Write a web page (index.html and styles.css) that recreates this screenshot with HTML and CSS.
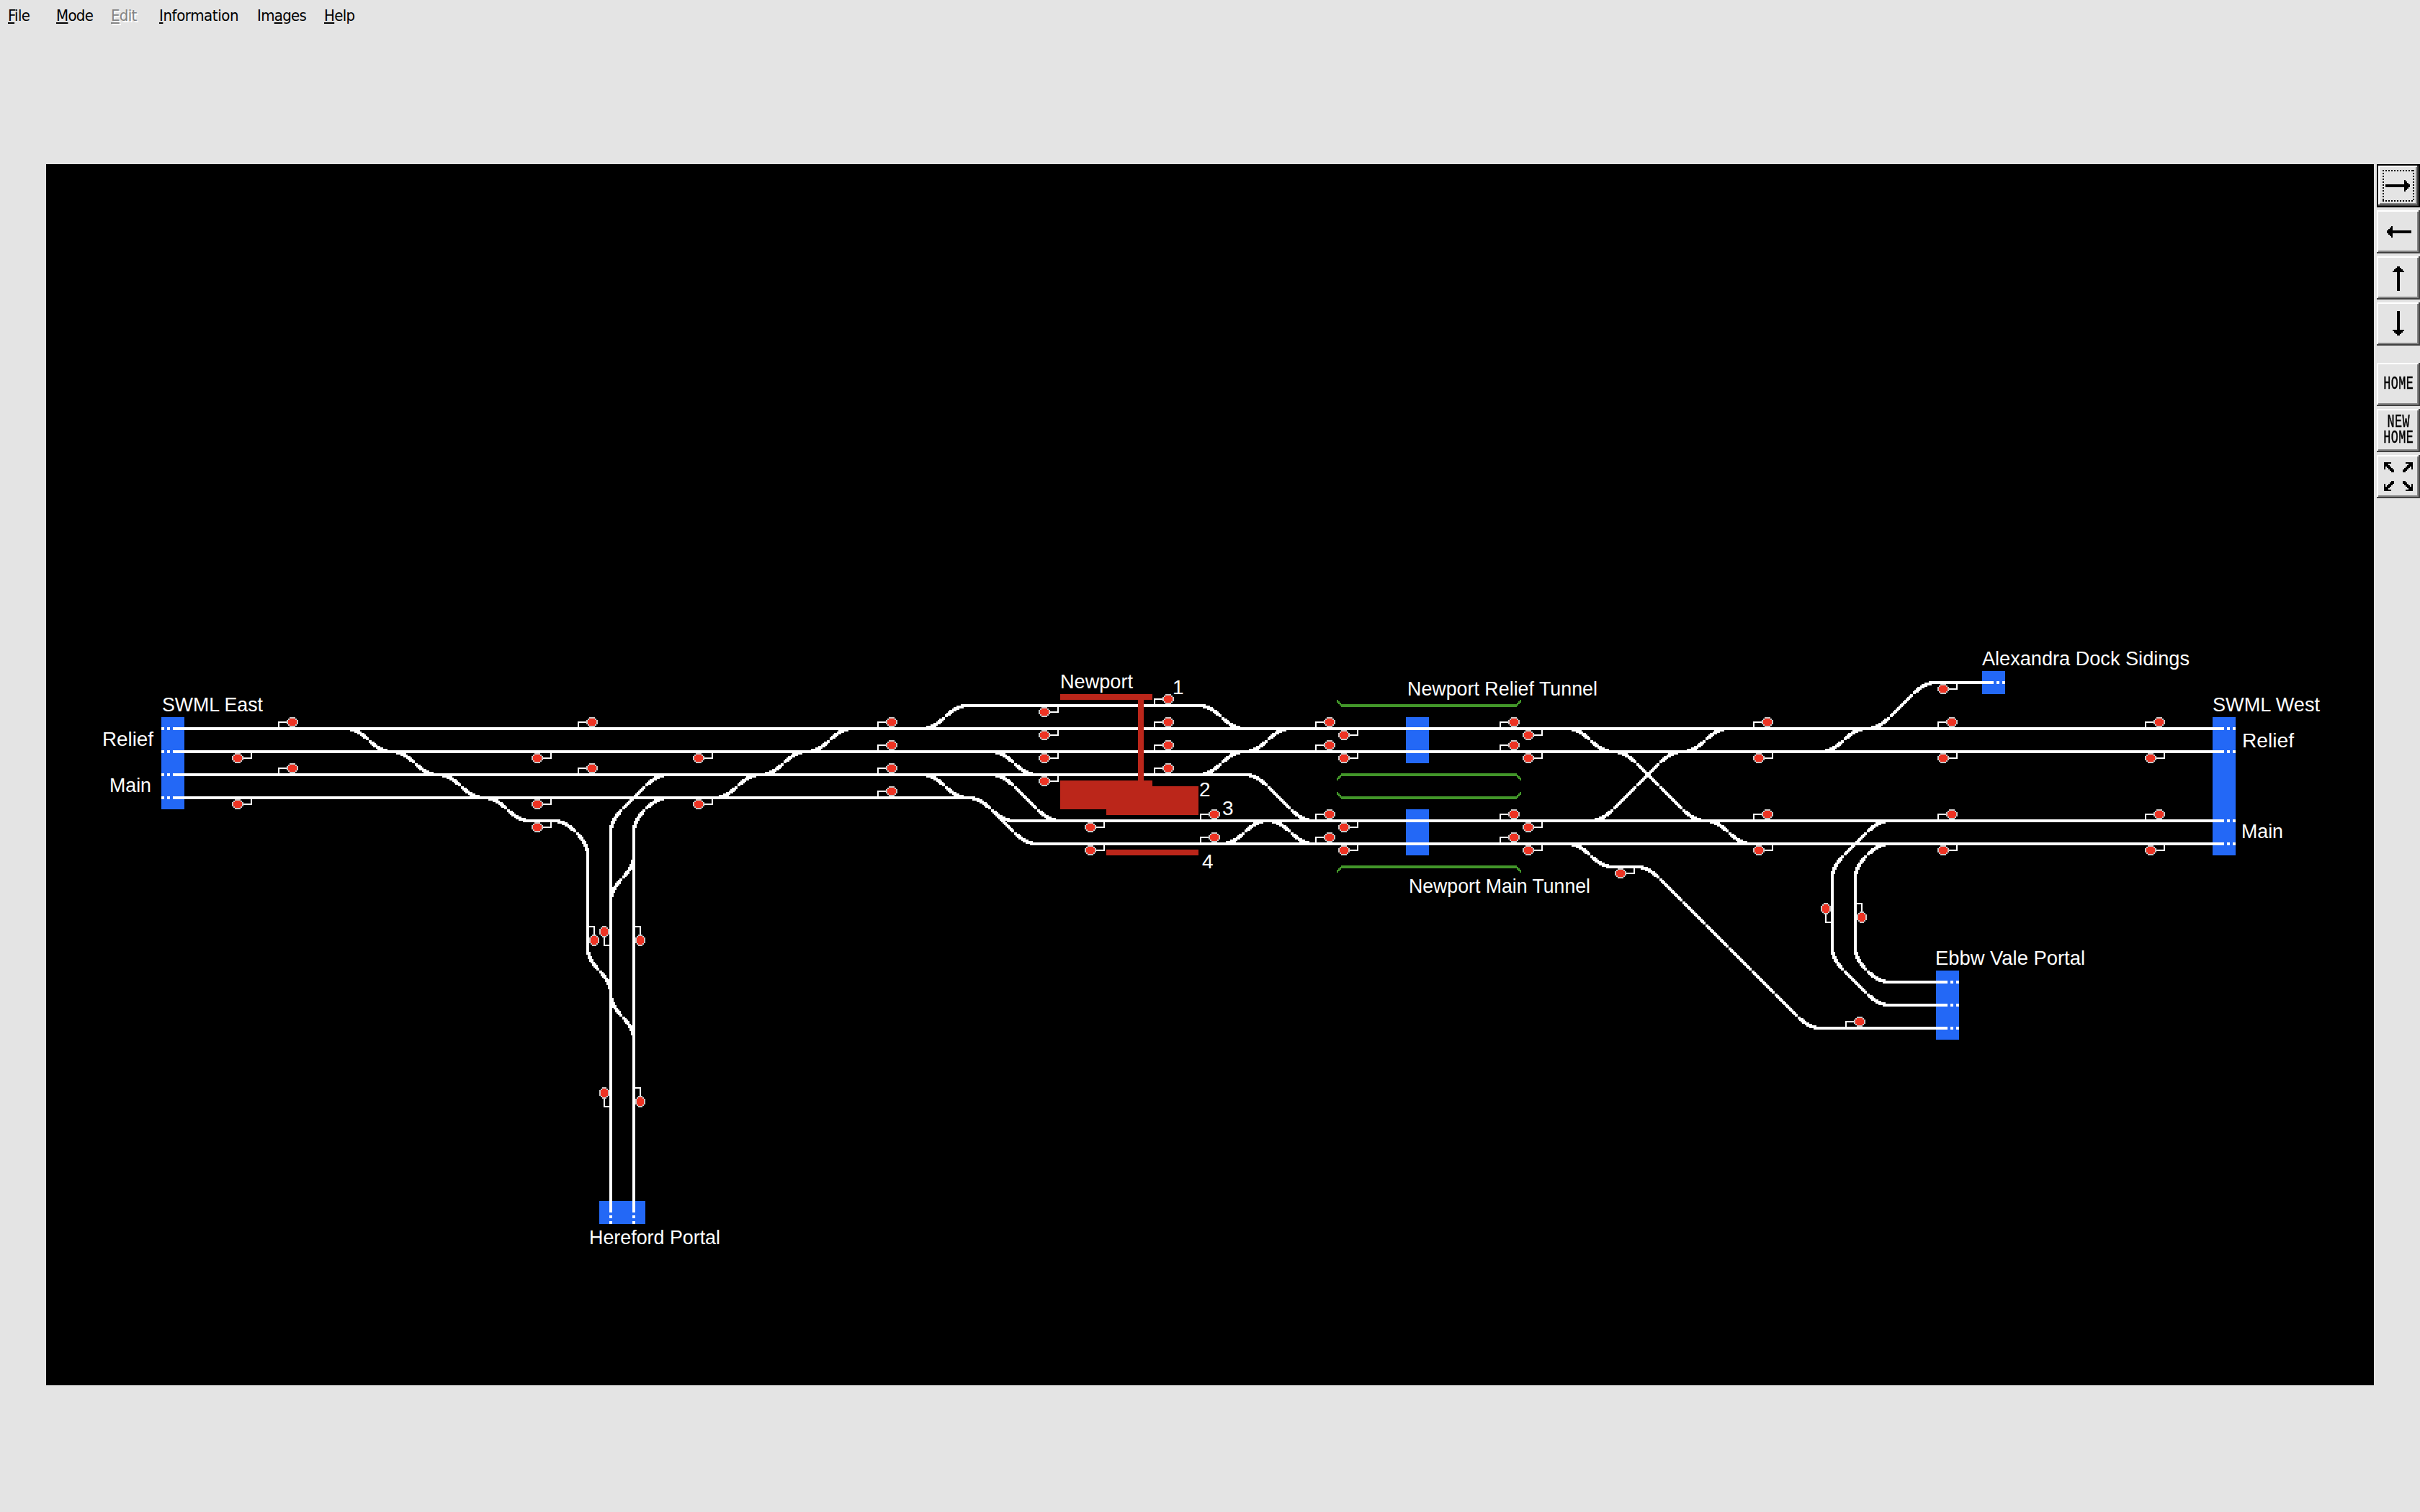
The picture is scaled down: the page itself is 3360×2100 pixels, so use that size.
FILE: index.html
```html
<!DOCTYPE html>
<html lang="en">
<head>
<meta charset="utf-8">
<title>Newport</title>
<link rel="stylesheet" href="styles.css">
</head>
<body>
<nav class="menu">
  <span class="item file"><u>F</u>ile</span>
  <span class="item mode"><u>M</u>ode</span>
  <span class="item edit disabled"><u>E</u>dit</span>
  <span class="item information"><u>I</u>nformation</span>
  <span class="item images">Im<u>a</u>ges</span>
  <span class="item help"><u>H</u>elp</span>
</nav>
<main class="workspace">
  <svg class="diagram" viewBox="64 228 3232 1696">
    <defs>
      <g id="sig-up">
        <path class="post" d="M-20-10h12v2h-10v6h-2z"/>
        <path class="rim" d="M-4-16h8v2h2v2h2v6h-2v2h-2v2h-8v-2h-2v-2h-2v-6h2v-2h2z"/>
        <path class="lamp" d="M-4-14h8v2h2v6h-2v2h-8v-2h-2v-6h2z"/>
      </g>
      <g id="sig-left">
        <path class="post" d="M-10 16h2v10h6v2h-8z"/>
        <path class="rim" d="M-12 0h6v2h2v2h2v8h-2v2h-2v2h-6v-2h-2v-2h-2v-8h2v-2h2z"/>
        <path class="lamp" d="M-12 2h6v2h2v8h-2v2h-6v-2h-2v-8h2z"/>
      </g>
    </defs>
    <g class="portals">
      <rect x="224" y="996" width="32" height="128"/>
      <rect x="832" y="1668" width="64" height="32"/>
      <rect x="1952" y="996" width="32" height="64"/>
      <rect x="1952" y="1124" width="32" height="64"/>
      <rect x="2752" y="932" width="32" height="32"/>
      <rect x="3072" y="996" width="32" height="192"/>
      <rect x="2688" y="1348" width="32" height="96"/>
    </g>
    <path class="tunnels" id="tunnels"/>
    <path class="track" id="track"/>
    <g class="platforms">
      <rect x="1472" y="964" width="128" height="8"/>
      <rect x="1580" y="964" width="8" height="120"/>
      <rect x="1472" y="1084" width="128" height="40"/>
      <rect x="1536" y="1092" width="128" height="40"/>
      <rect x="1536" y="1180" width="128" height="8"/>
    </g>
    <g id="signals"></g>
    <g class="labels">
      <text x="225" y="988" textLength="140" lengthAdjust="spacingAndGlyphs">SWML East</text>
      <text x="142" y="1036" textLength="71" lengthAdjust="spacingAndGlyphs">Relief</text>
      <text x="152" y="1100" textLength="58" lengthAdjust="spacingAndGlyphs">Main</text>
      <text x="818" y="1728" textLength="182" lengthAdjust="spacingAndGlyphs">Hereford Portal</text>
      <text x="1472" y="956" textLength="101" lengthAdjust="spacingAndGlyphs">Newport</text>
      <text x="1628" y="964">1</text>
      <text x="1665" y="1106">2</text>
      <text x="1697" y="1132">3</text>
      <text x="1669" y="1206">4</text>
      <text x="1954" y="966" textLength="264" lengthAdjust="spacingAndGlyphs">Newport Relief Tunnel</text>
      <text x="1956" y="1240" textLength="252" lengthAdjust="spacingAndGlyphs">Newport Main Tunnel</text>
      <text x="2752" y="924" textLength="288" lengthAdjust="spacingAndGlyphs">Alexandra Dock Sidings</text>
      <text x="3072" y="988" textLength="149" lengthAdjust="spacingAndGlyphs">SWML West</text>
      <text x="3113" y="1038" textLength="72" lengthAdjust="spacingAndGlyphs">Relief</text>
      <text x="3112" y="1164" textLength="58" lengthAdjust="spacingAndGlyphs">Main</text>
      <text x="2687" y="1340" textLength="208" lengthAdjust="spacingAndGlyphs">Ebbw Vale Portal</text>
    </g>
  </svg>
  <div class="tools">
    <button class="tool active"><svg viewBox="0 0 30 30"><path d="M6 14h13v-3h1v1h1v1h1v1h1v2h-1v1h-1v1h-1v1h-1v-3h-13z"/></svg></button>
    <button class="tool"><svg viewBox="0 0 30 30"><path d="M24 14h-13v-3h-1v1h-1v1h-1v1h-1v2h1v1h1v1h1v1h1v-3h13z"/></svg></button>
    <button class="tool"><svg viewBox="0 0 30 30"><path d="M14 24v-13h-3v-1h1v-1h1v-1h1v-1h2v1h1v1h1v1h1v1h-3v13z"/></svg></button>
    <button class="tool"><svg viewBox="0 0 30 30"><path d="M14 6v13h-3v1h1v1h1v1h1v1h2v-1h1v-1h1v-1h1v-1h-3v-13z"/></svg></button>
    <button class="tool spaced"><span class="caption">HOME</span></button>
    <button class="tool"><span class="caption">NEW<br>HOME</span></button>
    <button class="tool"><svg viewBox="0 0 30 30">
      <defs><path id="corner" d="M5 5h5v1h-2v1h1v1h1v1h1v1h1v2h-2v-1h-1v-1h-1v-1h-1v-1h-1v2h-1z"/></defs>
      <use href="#corner"/>
      <use href="#corner" transform="matrix(-1 0 0 1 30 0)"/>
      <use href="#corner" transform="matrix(1 0 0 -1 0 30)"/>
      <use href="#corner" transform="matrix(-1 0 0 -1 30 30)"/>
    </svg></button>
  </div>
</main>
<script src="diagram.js"></script>
</body>
</html>
```
FILE: styles.css
```css
* { box-sizing: border-box; }

body {
  margin: 0;
  width: 3360px;
  height: 2100px;
  overflow: hidden;
  background: #e4e4e4;
  color: #000;
  font-family: "DejaVu Sans Condensed", "DejaVu Sans", sans-serif;
}

.menu {
  display: flex;
  height: 228px;
  padding: 8px 0 0 11px;
  font-size: 22px;
  line-height: 28px;
  white-space: nowrap;
}

.item { flex: none; font-stretch: condensed; letter-spacing: -0.7px; }
.item u { text-decoration-thickness: 2px; text-underline-offset: 2px; text-decoration-skip-ink: none; }
.file { width: 67px; }
.mode { width: 76px; }
.edit { width: 67px; }
.information { width: 136px; letter-spacing: -0.4px; }
.images { width: 93px; }
.disabled { color: #848484; text-shadow: 2px 2px #fff; }

.workspace {
  display: flex;
  gap: 4px;
  padding-left: 64px;
}

.diagram {
  display: block;
  flex: none;
  width: 3232px;
  height: 1696px;
  background: #000;
  shape-rendering: crispEdges;
}

.portals { fill: #2368f6; }
.platforms { fill: #bb261a; }
.tunnels { fill: #429629; }
.track, .post { fill: #fff; }
.rim { fill: #c8c8c8; }
.lamp { fill: #ed3323; }
.labels {
  fill: #fff;
  font-family: "Liberation Sans", Arial, sans-serif;
  font-size: 28px;
}

.tools { display: flex; flex-direction: column; gap: 4px; }

.tool {
  display: flex;
  align-items: center;
  justify-content: center;
  width: 60px;
  height: 60px;
  padding: 0;
  border: 0;
  color: #000;
  background: #e4e4e4;
  box-shadow: inset -2px -2px #424242, inset 2px 2px #fff, inset -4px -4px #848484;
}
.tool svg {
  display: block;
  width: 60px;
  height: 60px;
  shape-rendering: crispEdges;
}
.caption {
  flex: none;
  font: 25px/22px "Liberation Mono", "Courier New", monospace;
  letter-spacing: 0.6px;
  -webkit-text-stroke: 0.5px #000;
  text-align: center;
  transform: scaleX(0.67);
}
.tool.spaced { margin-top: 20px; }
.tool.active {
  position: relative;
  box-shadow: inset 0 0 0 2px #000, inset -4px -4px #424242, inset 4px 4px #fff, inset -6px -6px #848484;
}
.tool.active::after {
  content: "";
  position: absolute;
  inset: 8px;
  background:
    repeating-linear-gradient(90deg, #000 0 2px, transparent 2px 4px) 0 0 / 100% 2px no-repeat,
    repeating-linear-gradient(90deg, #000 0 2px, transparent 2px 4px) 0 100% / 100% 2px no-repeat,
    repeating-linear-gradient(#000 0 2px, transparent 2px 4px) 0 0 / 2px 100% no-repeat,
    repeating-linear-gradient(#000 0 2px, transparent 2px 4px) 100% 0 / 2px 100% no-repeat;
}
```
FILE: diagram.js
```js
// The diagram is built from 32px cells whose origin is (64, 228);
// curves are stepped on a 2px grid and clipped to their own cell.
const cells = new Set();
let trackPath = "";

function rect(x, y, w, h) { return `M${x} ${y}h${w}v${h}h${-w}z`; }

function stamp(x, y, box) {
  const px = Math.round((x - 2) / 2) * 2, py = Math.round((y - 2) / 2) * 2;
  for (const dx of [0, 2]) for (const dy of [0, 2]) {
    const a = px + dx, b = py + dy;
    if (a >= box[0] && b >= box[1] && a < box[0] + 32 && b < box[1] + 32) cells.add(a + "," + b);
  }
}

function piece(x0, y0, x1, y1) {
  const dx = x1 - x0, dy = y1 - y0;
  let cx = (x0 + x1) / 2, cy = (y0 + y1) / 2;
  let box = [Math.min(x0, x1), Math.min(y0, y1)];
  if (Math.abs(dy) === 16) {
    cy = (y0 - 228) % 32 === 16 ? y0 : y1;
    box[1] = cy - 16;
  } else if (Math.abs(dx) === 16) {
    cx = (x0 - 64) % 32 === 16 ? x0 : x1;
    box[0] = cx - 16;
  }
  for (let i = 0; i <= 151; i++) {
    const t = i / 151, s = 1 - t;
    stamp(s * s * x0 + 2 * s * t * cx + t * t * x1, s * s * y0 + 2 * s * t * cy + t * t * y1, box);
  }
}

function track(...p) {
  for (let i = 0; i + 3 < p.length; i += 2) {
    const [x0, y0, x1, y1] = p.slice(i, i + 4);
    const dx = x1 - x0, dy = y1 - y0;
    if (dy === 0) trackPath += rect(Math.min(x0, x1), y0 - 2, Math.abs(dx), 4);
    else if (dx === 0) trackPath += rect(x0 - 2, Math.min(y0, y1), 4, Math.abs(dy));
    else if (Math.abs(dx) === Math.abs(dy)) {
      const n = Math.abs(dx) / 32;
      for (let k = 0; k < n; k++)
        piece(x0 + dx * k / n, y0 + dy * k / n, x0 + dx * (k + 1) / n, y0 + dy * (k + 1) / n);
    } else piece(x0, y0, x1, y1);
  }
}

// running lines
track(240, 1012, 3088, 1012);
track(240, 1044, 3088, 1044);
track(240, 1076, 1728, 1076, 1760, 1092, 1792, 1124, 1824, 1140);
track(240, 1108, 1344, 1108, 1376, 1124, 1408, 1156, 1440, 1172, 3088, 1172);
track(1376, 1124, 1408, 1140, 3088, 1140);
track(1344, 980, 1664, 980);
for (const y of [1012, 1044, 1076, 1108]) for (const x of [224, 232]) trackPath += rect(x, y - 2, 4, 4);
for (const y of [1012, 1044, 1140, 1172]) for (const x of [3092, 3100]) trackPath += rect(x, y - 2, 4, 4);

// crossovers: centre corner, falling or rising to the right
for (const [x, y] of [[512, 1028], [576, 1060], [640, 1092], [704, 1124], [1312, 1092], [1408, 1060],
  [1696, 996], [1792, 1156], [2208, 1028], [2400, 1156], [2208, 1188]]) track(x - 32, y - 16, x, y, x + 32, y + 16);
for (const [x, y] of [[1024, 1092], [1088, 1060], [1152, 1028], [1312, 996], [1696, 1060], [1760, 1028],
  [1728, 1156], [2368, 1028], [2560, 1028]]) track(x - 32, y + 16, x, y, x + 32, y - 16);
track(1376, 1076, 1408, 1092, 1440, 1124, 1472, 1140);
track(2240, 1044, 2272, 1060, 2336, 1124, 2368, 1140);
track(2208, 1140, 2240, 1124, 2304, 1060, 2336, 1044);

// Hereford branch
track(736, 1140, 768, 1140, 800, 1156, 816, 1188, 816, 1316, 832, 1348, 848, 1380, 864, 1412, 880, 1444);
track(928, 1076, 896, 1092, 864, 1124, 848, 1156, 848, 1684);
track(928, 1108, 896, 1124, 880, 1156, 880, 1684);
track(880, 1188, 864, 1220, 848, 1252);
for (const x of [848, 880]) for (const y of [1688, 1696]) trackPath += rect(x - 2, y, 4, 4);

// Alexandra Dock and Ebbw Vale
track(2592, 1012, 2624, 996, 2656, 964, 2688, 948, 2768, 948);
track(2240, 1204, 2272, 1204, 2304, 1220, 2496, 1412, 2528, 1428, 2704, 1428);
track(2624, 1140, 2592, 1156, 2560, 1188, 2544, 1220, 2544, 1316, 2560, 1348, 2592, 1380, 2624, 1396, 2704, 1396);
track(2624, 1172, 2592, 1188, 2576, 1220, 2576, 1316, 2592, 1348, 2624, 1364, 2704, 1364);
for (const x of [2772, 2780]) trackPath += rect(x, 946, 4, 4);
for (const y of [1364, 1396, 1428]) for (const x of [2708, 2716]) trackPath += rect(x, y - 2, 4, 4);

// merge the stepped pixels with the straight runs, all wound the same way
for (const c of cells) { const [x, y] = c.split(","); trackPath += rect(+x, +y, 2, 2); }
document.getElementById("track").setAttribute("d", trackPath);

// tunnel walls; s is the side the ends flare to
let walls = "";
for (const [y, s] of [[980, -1], [1076, 1], [1108, -1], [1204, 1]]) {
  walls += rect(1862, y - 2, 244, 4);
  for (const [i, near, far] of [[0, 4, 8], [2, 2, 6], [4, 0, 4]]) {
    const top = s < 0 ? y - far : y + near;
    walls += rect(1856 + i, top, 2, far - near) + rect(2110 - i, top, 2, far - near);
  }
}
document.getElementById("tunnels").setAttribute("d", walls);

// signals
let out = "";
const put = (id, x, y, turn) => { out += `<use href="#${id}" transform="translate(${x} ${y})${turn ? " rotate(180)" : ""}"/>`; };
const up = { 406: [1012, 1076], 822: [1012, 1076], 1238: [1012, 1044, 1076, 1108], 1622: [980, 1012, 1044, 1076],
  1686: [1140, 1172], 1846: [1012, 1044, 1140, 1172], 2102: [1012, 1044, 1140, 1172], 2454: [1012, 1140],
  2710: [1012, 1140], 2998: [1012, 1140], 2582: [1428] };
const down = { 330: [1044, 1108], 746: [1044, 1108, 1140], 970: [1044, 1108], 1450: [980, 1012, 1044, 1076],
  1514: [1140, 1172], 1866: [1012, 1044, 1140, 1172], 2122: [1012, 1044, 1140, 1172], 2250: [1204],
  2442: [1044, 1172], 2698: [948, 1044, 1172], 2986: [1044, 1172] };
for (const x in up) for (const y of up[x]) put("sig-up", x, y);
for (const x in down) for (const y of down[x]) put("sig-up", x, y, true);
for (const [x, y] of [[848, 1286], [848, 1510], [2544, 1254]]) put("sig-left", x, y);
for (const [x, y] of [[816, 1286], [880, 1286], [880, 1510], [2576, 1254]]) put("sig-left", x, y + 28, true);
document.getElementById("signals").innerHTML = out;
```
